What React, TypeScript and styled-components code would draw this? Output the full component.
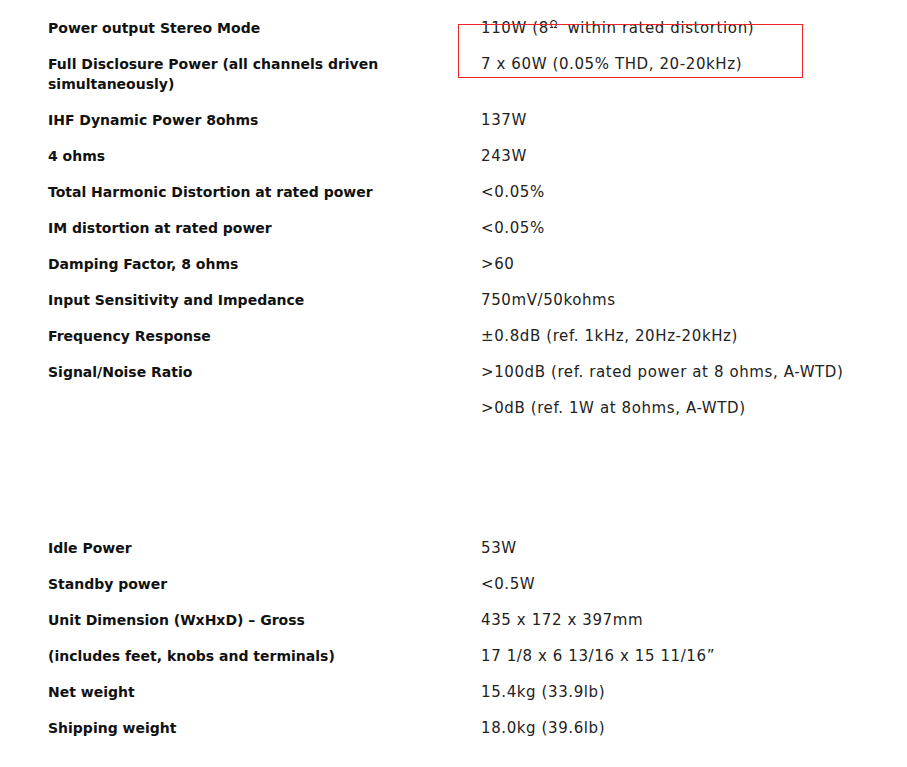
import type { ReactNode } from 'react';
import styled, { createGlobalStyle } from 'styled-components';

const GlobalStyle = createGlobalStyle`
    body {
        margin: 0;
        background: #fff;
        font-family: "DejaVu Sans", Verdana, sans-serif;
        color: #111;
    }
`

const Page = styled.main`
    position: relative;
    width: 907px;
    padding: 10px 0 21px 48px;
    box-sizing: border-box;
`

const Table = styled.section<{ $gap: number }>`
    display: flex;
    flex-direction: column;
    margin-bottom: ${p => p.$gap}px;
`

const Row = styled.div`
    display: grid;
    grid-template-columns: 433px 1fr;
    align-items: start;
    padding: 8px 0;
    line-height: 20px;
`

const Label = styled.div`
    font-size: 14px;
    font-weight: 700;
    color: #111;
    padding-right: 40px;
`

const Value = styled.div`
    font-size: 15px;
    letter-spacing: 0.6px;
    color: #222;
`

const Ohm = styled.span`
    font-size: 10px;
    line-height: 0;
    vertical-align: 5px;
    margin: 0 4px 0 1px;
`

const Highlight = styled.div`
    position: absolute;
    left: 458px;
    top: 24px;
    width: 343px;
    height: 52px;
    border: 1px solid #e8262b;
    pointer-events: none;
`

type Spec = { label: string; value: ReactNode }

const topSpecs: Spec[] = [
    { label: 'Power output Stereo Mode', value: <>110W (8<Ohm>Ω</Ohm> within rated distortion)</> },
    { label: 'Full Disclosure Power (all channels driven simultaneously)', value: '7 x 60W (0.05% THD, 20-20kHz)' },
    { label: 'IHF Dynamic Power 8ohms', value: '137W' },
    { label: '4 ohms', value: '243W' },
    { label: 'Total Harmonic Distortion at rated power', value: '<0.05%' },
    { label: 'IM distortion at rated power', value: '<0.05%' },
    { label: 'Damping Factor, 8 ohms', value: '>60' },
    { label: 'Input Sensitivity and Impedance', value: '750mV/50kohms' },
    { label: 'Frequency Response', value: '±0.8dB (ref. 1kHz, 20Hz-20kHz)' },
    { label: 'Signal/Noise Ratio', value: '>100dB (ref. rated power at 8 ohms, A-WTD)' },
    { label: '', value: '>0dB (ref. 1W at 8ohms, A-WTD)' },
]

const bottomSpecs: Spec[] = [
    { label: 'Idle Power', value: '53W' },
    { label: 'Standby power', value: '<0.5W' },
    { label: 'Unit Dimension (WxHxD) – Gross', value: '435 x 172 x 397mm' },
    { label: '(includes feet, knobs and terminals)', value: '17 1/8 x 6 13/16 x 15 11/16”' },
    { label: 'Net weight', value: '15.4kg (33.9lb)' },
    { label: 'Shipping weight', value: '18.0kg (39.6lb)' },
]

export default function App(){
  return (
    <>
        <GlobalStyle/>
        <Page>
            <Table $gap={104}>
                {topSpecs.map((s, i) => (
                    <Row key={i}>
                        <Label>{s.label}</Label>
                        <Value>{s.value}</Value>
                    </Row>
                ))}
            </Table>
            <Table $gap={0}>
                {bottomSpecs.map((s, i) => (
                    <Row key={i}>
                        <Label>{s.label}</Label>
                        <Value>{s.value}</Value>
                    </Row>
                ))}
            </Table>
            <Highlight/>
        </Page>
    </>
  )
}
